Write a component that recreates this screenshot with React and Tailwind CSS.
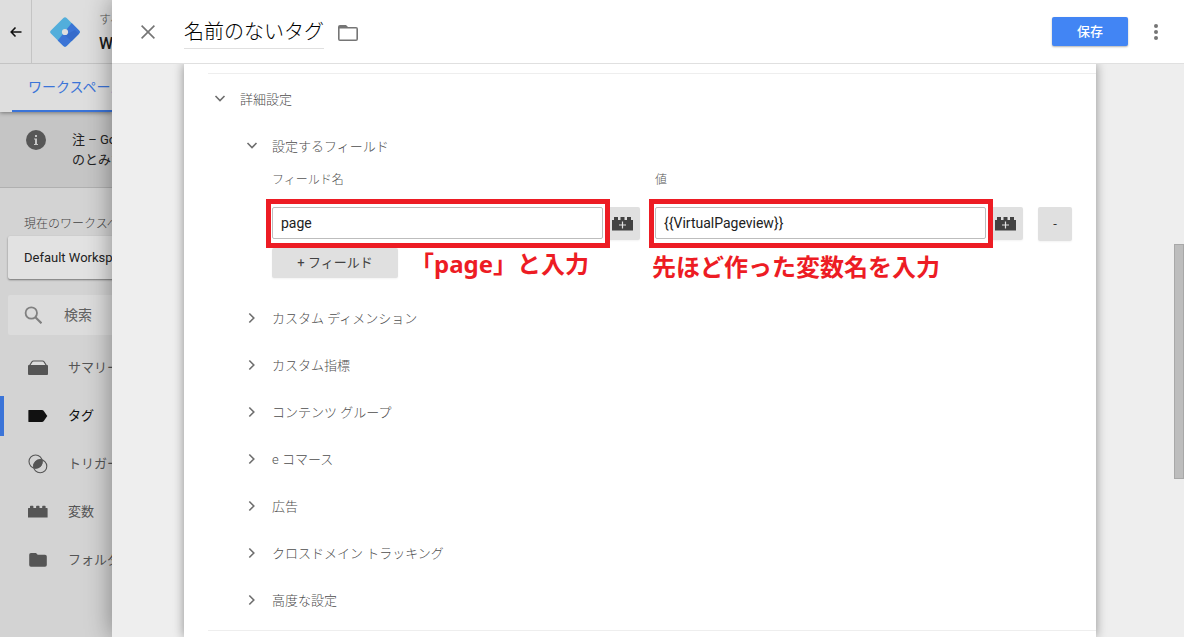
import { useState } from "react";
import clsx from "clsx";

const navItems = [
    { label: "サマリー", icon: SummaryIcon },
    { label: "タグ", icon: TagIcon, active: true },
    { label: "トリガー", icon: TriggerIcon },
    { label: "変数", icon: BrickIcon },
    { label: "フォルダ", icon: FolderIcon },
];

const sections = [
    "カスタム ディメンション",
    "カスタム指標",
    "コンテンツ グループ",
    "e コマース",
    "広告",
    "クロスドメイン トラッキング",
    "高度な設定",
];

function LogoIcon() {
    return (
        <svg className="shrink-0" width="30" height="30" viewBox="0 0 30 30">
            <path d="M13.400.9a2.300 2.300 0 0 1 3.200 0L29.100 13.400a2.300 2.300 0 0 1 0 3.200L16.600 29.100a2.300 2.300 0 0 1-3.200 0L.9 16.600a2.300 2.300 0 0 1 0-3.200z" fill="#52aedb" />
            <path d="M21.700 6l7.400 7.400a2.300 2.300 0 0 1 0 3.200L16.600 29.100a2.300 2.300 0 0 1-3.200 0L7.700 23.400 11 19.500z" fill="#3b74d6" />
            <path d="M15 18.200 21.500 24.200 29 16.700 25 13z" fill="#356bcb" />
            <circle cx="15" cy="15" r="3.100" fill="#dedede" />
        </svg>
    );
}

function SummaryIcon() {
    return (
        <svg width="20" height="16" viewBox="0 0 20 16">
            <path d="M1 6.500 4 1.800Q4.500 1 5.500 1h9q1 0 1.500.8L19 6.500" fill="#dcdcdc" stroke="currentColor" strokeWidth="1.200" />
            <rect y="5" width="20" height="10" rx="1" fill="currentColor" />
        </svg>
    );
}

function TagIcon() {
    return (
        <svg width="20" height="14" viewBox="0 0 20 14">
            <path d="M1 1h13q1 0 1.600.8L19.300 7l-3.700 5.200q-.6.8-1.600.8H1q-.6 0-.6-.6V1.600Q.4 1 1 1z" fill="currentColor" />
        </svg>
    );
}

function TriggerIcon() {
    return (
        <svg width="20" height="20" viewBox="0 0 20 20">
            <circle cx="7.600" cy="7.600" r="6.600" fill="none" stroke="currentColor" strokeWidth="1.100" />
            <circle cx="12.200" cy="12.200" r="6.600" fill="none" stroke="currentColor" strokeWidth="1.100" />
            <path d="M14.200 5.900A6.600 6.600 0 0 0 5.900 14.200 6.600 6.600 0 0 0 14.200 5.900z" fill="currentColor" />
        </svg>
    );
}

function BrickIcon() {
    return (
        <svg width="20" height="14" viewBox="0 0 20 14">
            <path d="M0 3.500Q0 3 .5 3H2V1.500q0-.7.700-.7h2q.7 0 .7.700V3h2.700V1.500q0-.7.700-.7h2q.7 0 .7.700V3h2.700V1.500q0-.7.700-.7h2q.7 0 .7.700V3h1.400q.6 0 .6.500V12.500H0z" fill="currentColor" />
        </svg>
    );
}

function FolderIcon() {
    return (
        <svg width="18" height="14" viewBox="0 0 18 14">
            <path d="M2 0h5l1.700 1.800H16a1.800 1.800 0 0 1 1.800 1.800V12A1.800 1.800 0 0 1 16 13.800H2A1.800 1.800 0 0 1 .2 12V1.800A1.800 1.800 0 0 1 2 0z" fill="currentColor" />
        </svg>
    );
}

function BrickPlusIcon() {
    return (
        <svg width="22" height="14" viewBox="0 0 22 14">
            <path d="M0 3h2V0h4v3h2.500V0h4v3H15V0h4v3h2v10.500H0z" fill="#424242" />
            <path d="M10.500 4.500v7M7 8h7" stroke="#e0e0e0" strokeWidth="1.200" />
        </svg>
    );
}

function Chevron({ open }) {
    return (
        <svg
            className="shrink-0"
            width="24"
            height="24"
            viewBox="0 0 24 24"
            fill="none"
            stroke="#6e6e6e"
            strokeWidth="1.600"
        >
            <path d={open ? "M7.500 8 12 12.500l4.500-4.500" : "M9.300 6.500l4.500 4.500-4.500 4.500"} />
        </svg>
    );
}

function SectionRow({ label, open }) {
    return (
        <button
            type="button"
            aria-expanded={!!open}
            className="flex items-center gap-2 pb-[2px] h-[47px] text-[13px] font-light text-[#4d4d4d]"
        >
            <Chevron open={open} />
            {label}
        </button>
    );
}

function Field({ id, label, value, onChange }) {
    return (
        <div className="flex-1 min-w-0">
            <label htmlFor={id} className="block text-xs leading-[18px] font-light text-[#555]">
                {label}
            </label>
            <div className="flex gap-[3px] mt-[18px]">
                <div className="relative z-10 flex-1 min-w-0">
                    <input
                        id={id}
                        type="text"
                        value={value}
                        onChange={(e) => onChange(e.target.value)}
                        className="block px-2 w-full h-8 text-sm text-[#212121] bg-white rounded-xs border border-[#bdbdbd] outline-none"
                    />
                    <div className="absolute -inset-y-2 -left-[6px] -right-[7px] border-5 border-[#ed1c24] pointer-events-none" />
                </div>
                <button
                    type="button"
                    aria-label="変数を選択"
                    className="flex shrink-0 justify-center items-center w-[34px] h-[33px] bg-[#e0e0e0] rounded-xs shadow-xs"
                >
                    <BrickPlusIcon />
                </button>
            </div>
        </div>
    );
}

function Sidebar() {
    return (
        <aside className="overflow-hidden w-28 shrink-0 whitespace-nowrap bg-[#d3d3d3]">
            <div className="relative bg-[#dedede] shadow-[0_1px_4px_rgba(0,0,0,0.4)]">
                <div className="flex h-16 border-b border-[#c4c4c4]">
                    <button
                        type="button"
                        aria-label="戻る"
                        className="flex shrink-0 justify-center items-center w-8 border-r border-[#c4c4c4]"
                    >
                        <svg width="12" height="12" viewBox="0 0 12 12" fill="none" stroke="#111" strokeWidth="1.600">
                            <path d="M5.500 1.500 1.200 6l4.300 4.500M1.200 6H11.500" />
                        </svg>
                    </button>
                    <div className="flex gap-[19px] items-center pl-[18px]">
                        <LogoIcon />
                        <div>
                            <div className="text-xs leading-6 font-light text-[#555]">すべてのアカウント</div>
                            <div className="text-base leading-6 font-medium text-[#1c1c1c]">W</div>
                        </div>
                    </div>
                </div>
                <a
                    href="#workspace"
                    className="block pl-4 ml-3 h-12 text-sm leading-[46px] text-[#3b74d8] border-b-2 border-[#3b74d8]"
                >
                    ワークスペース
                </a>
            </div>

            <div className="flex gap-[26px] pt-[18px] pl-[26px] h-[76px] bg-[#c5c5c5] border-b border-[#b0b0b0]">
                <svg className="shrink-0" width="20" height="20" viewBox="0 0 20 20">
                    <circle cx="10" cy="10" r="10" fill="#575757" />
                    <path d="M8 8.500h3V14h1v1H8v-1h1V9.500H8zM9 5h2v2H9z" fill="#c5c5c5" />
                </svg>
                <p className="text-[13px] leading-5 text-[#222]">
                    注 – Google
                    <br />
                    のとみなさ
                </p>
            </div>

            <div className="pl-2 mt-6">
                <div className="pl-4 text-xs leading-6 font-light text-[#444]">現在のワークスペース</div>
                <button
                    type="button"
                    className="block pl-4 w-40 h-[43px] text-left text-[13px] text-[#222] bg-[#e2e2e2] rounded-xs shadow-[0_1px_2px_rgba(0,0,0,0.45)]"
                >
                    Default Workspace
                </button>
                <div className="flex items-center pl-4 mt-4 w-40 h-10 bg-[#dcdcdc] rounded-xs">
                    <svg width="18" height="18" viewBox="0 0 18 18" fill="none" stroke="#808080" strokeWidth="1.800">
                        <circle cx="7.300" cy="7" r="5.700" />
                        <path d="M11.400 11.200 17.500 17.300" strokeWidth="2.200" />
                    </svg>
                    <input
                        type="text"
                        aria-label="検索"
                        placeholder="検索"
                        className="ml-[22px] w-20 text-sm bg-transparent outline-none placeholder:text-[#606060]"
                    />
                </div>
            </div>

            <nav className="flex flex-col gap-2 mt-[13px]">
                {navItems.map(({ label, icon: Icon, active }) => (
                    <a
                        key={label}
                        href="#nav"
                        className={clsx(
                            "flex gap-5 items-center pl-6 h-10 text-[13px] border-l-4",
                            active
                                ? "text-[#111] border-[#3b74d8]"
                                : "text-[#555] border-transparent"
                        )}
                    >
                        <span className="flex shrink-0 justify-center w-5">
                            <Icon />
                        </span>
                        {label}
                    </a>
                ))}
            </nav>
        </aside>
    );
}

export default function App() {
    const [title, setTitle] = useState("名前のないタグ");
    const [name, setName] = useState("page");
    const [value, setValue] = useState("{{VirtualPageview}}");

    return (
        <div className="flex overflow-hidden h-screen font-[Roboto,'Noto_Sans_CJK_JP',sans-serif]">
            <Sidebar />

            <main className="flex relative flex-col flex-1 min-w-0 bg-[#eee] shadow-[0_0_24px_rgba(0,0,0,0.4)]">
                <header className="flex relative z-20 shrink-0 items-center pr-4 pl-6 h-16 bg-white border-b border-[#e0e0e0]">
                    <button type="button" aria-label="閉じる" className="flex justify-center items-center w-6 h-6">
                        <svg width="14" height="14" viewBox="0 0 14 14" stroke="#757575" strokeWidth="1.600">
                            <path d="M.6.6l12.800 12.800M13.400.6.6 13.400" />
                        </svg>
                    </button>
                    <input
                        type="text"
                        aria-label="タグの名前"
                        value={title}
                        onChange={(e) => setTitle(e.target.value)}
                        className="pb-[2px] ml-6 w-[140px] h-[34px] text-xl font-light text-black border-b border-[#e0e0e0] outline-none"
                    />
                    <button type="button" aria-label="フォルダ" className="mt-[2px] ml-[14px]">
                        <svg width="20" height="16" viewBox="0 0 20 16" fill="#757575">
                            <path fillRule="evenodd" d="M2 0h6l2 2h8a2 2 0 0 1 2 2v10a2 2 0 0 1-2 2H2a2 2 0 0 1-2-2V2a2 2 0 0 1 2-2zm-.4 3.600v10.800h16.800V3.600z" />
                        </svg>
                    </button>
                    <button
                        type="button"
                        className="ml-auto w-[76px] h-[29px] text-[13px] font-medium text-white bg-[#4285f4] rounded-xs shadow-[0_1px_2px_rgba(0,0,0,0.3)]"
                    >
                        保存
                    </button>
                    <button type="button" aria-label="その他" className="flex justify-center ml-4 w-6">
                        <svg width="4" height="16" viewBox="0 0 4 16" fill="#757575">
                            <circle cx="2" cy="2" r="2" />
                            <circle cx="2" cy="8" r="2" />
                            <circle cx="2" cy="14" r="2" />
                        </svg>
                    </button>
                </header>

                <div className="flex-1 mr-[88px] ml-[72px] pt-[9px] pl-6 bg-white shadow-[0_0_10px_rgba(0,0,0,0.4)]">
                    <hr className="mb-[3px] border-[#eee]" />
                    <SectionRow label="詳細設定" open />
                    <div className="pr-6 pl-8">
                        <SectionRow label="設定するフィールド" open />
                        <div className="pl-8">
                            <div className="flex gap-[15px] items-start">
                                <Field id="field-name" label="フィールド名" value={name} onChange={setName} />
                                <Field id="field-value" label="値" value={value} onChange={setValue} />
                                <button
                                    type="button"
                                    aria-label="行を削除"
                                    className="mt-9 w-[34px] h-[34px] text-[13px] text-[#333] bg-[#e0e0e0] rounded-xs shadow-xs"
                                >
                                    -
                                </button>
                            </div>
                            <div className="relative mt-[7px]">
                                <button
                                    type="button"
                                    className="block w-[126px] h-[30px] text-[13px] text-[#424242] bg-[#e0e0e0] rounded-xs shadow-xs"
                                >
                                    + フィールド
                                </button>
                                <p className="absolute top-0 left-[138px] text-2xl font-bold text-[#ed1c24] whitespace-nowrap">
                                    「<span className="font-['Noto_Sans']">page</span>」と入力
                                </p>
                                <p className="absolute top-1 left-[380px] text-2xl font-bold text-[#ed1c24] whitespace-nowrap">
                                    先ほど作った変数名を入力
                                </p>
                            </div>
                        </div>
                        <div className="flex flex-col mt-[18px]">
                            {sections.map((label) => (
                                <SectionRow key={label} label={label} />
                            ))}
                        </div>
                    </div>
                    <hr className="mt-[5px] border-[#eee]" />
                </div>

                <div className="absolute right-0 top-[244px] w-[10px] h-[235px] bg-[#bdbdbd] border border-[#a8a8a8]" />
            </main>
        </div>
    );
}
